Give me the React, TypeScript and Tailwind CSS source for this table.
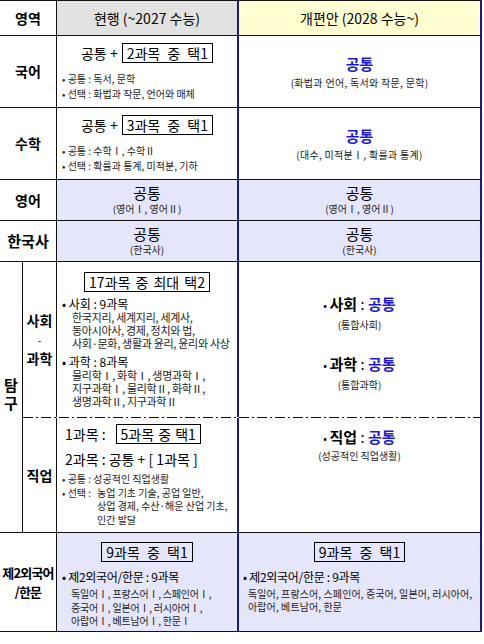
import React from "react";

const Box = ({ children, className = "" }: { children: React.ReactNode; className?: string }) => (
  <span className={"inline-flex items-center h-[20px] border border-black px-[4px] text-[14px] leading-[18px] " + className}>
    {children}
  </span>
);

const Blue = ({ children }: { children: React.ReactNode }) => (
  <span className="font-bold text-[#1a1ad0]">{children}</span>
);

export default function App() {
  return (
    <div className="w-[484px] h-[644px] bg-white font-['Noto_Sans_CJK_KR',sans-serif] text-black">
      <div className="grid grid-cols-[23px_34px_182px_243px] grid-rows-[36px_72px_72px_41px_41px_155px_1px_115px_99px]">
        {/* header */}
        <div className="col-start-1 col-span-2 row-start-1 flex items-center justify-center border-t border-b border-r border-[#111] text-[14px] font-bold">영역</div>
        <div className="col-start-3 row-start-1 flex items-center justify-center bg-[#e2e2e2] border-t border-b border-[#111] border-r-2 border-r-[#1c1c7c] text-[14px]">현행 (~2027 수능)</div>
        <div className="col-start-4 row-start-1 flex items-center justify-center bg-[#ffffd2] border-t border-b border-[#111] border-r-2 border-r-[#1c1c7c] text-[14px]">개편안 (2028 수능~)</div>

        {/* 국어 */}
        <div className="col-start-1 col-span-2 row-start-2 flex items-center justify-center border-b border-r border-[#111] text-[14px] font-bold">국어</div>
        <div className="col-start-3 row-start-2 flex flex-col justify-center border-b border-[#111] border-r-2 border-r-[#1c1c7c] px-[5px]">
          <div className="flex items-center justify-center gap-[4px] text-[14px] leading-[20px]">
            <span>공통 +</span>
            <Box className="[word-spacing:4px]">2과목 중 택1</Box>
          </div>
          <div className="mt-[8px] text-[10px] leading-[15px] text-[#222]">
            <div>• 공통 : 독서, 문학</div>
            <div>• 선택 : 화법과 작문, 언어와 매체</div>
          </div>
        </div>
        <div className="col-start-4 row-start-2 flex flex-col items-center justify-center border-b border-[#111] border-r-2 border-r-[#1c1c7c]">
          <div className="text-[15px] leading-[20px]"><Blue>공통</Blue></div>
          <div className="mt-[2px] text-[10px] leading-[14px] tracking-[0.3px] text-[#222]">(화법과 언어, 독서와 작문, 문학)</div>
        </div>

        {/* 수학 */}
        <div className="col-start-1 col-span-2 row-start-3 flex items-center justify-center border-b border-r border-[#111] text-[14px] font-bold">수학</div>
        <div className="col-start-3 row-start-3 flex flex-col justify-center border-b border-[#111] border-r-2 border-r-[#1c1c7c] px-[5px]">
          <div className="flex items-center justify-center gap-[4px] text-[14px] leading-[20px]">
            <span>공통 +</span>
            <Box className="[word-spacing:4px]">3과목 중 택1</Box>
          </div>
          <div className="mt-[8px] text-[10px] leading-[15px] text-[#222]">
            <div>• 공통 : 수학Ⅰ, 수학Ⅱ</div>
            <div>• 선택 : 확률과 통계, 미적분, 기하</div>
          </div>
        </div>
        <div className="col-start-4 row-start-3 flex flex-col items-center justify-center border-b border-[#111] border-r-2 border-r-[#1c1c7c]">
          <div className="text-[15px] leading-[20px]"><Blue>공통</Blue></div>
          <div className="mt-[2px] text-[10px] leading-[14px] tracking-[0.3px] text-[#222]">(대수, 미적분Ⅰ, 확률과 통계)</div>
        </div>

        {/* 영어 */}
        <div className="col-start-1 col-span-2 row-start-4 flex items-center justify-center border-b border-r border-[#111] text-[14px] font-bold">영어</div>
        <div className="col-start-3 row-start-4 flex flex-col items-center justify-center bg-[#e6e6fa] border-b border-[#111] border-r-2 border-r-[#1c1c7c]">
          <div className="text-[15px] leading-[18px]">공통</div>
          <div className="text-[10px] leading-[14px] text-[#222]">(영어Ⅰ, 영어Ⅱ)</div>
        </div>
        <div className="col-start-4 row-start-4 flex flex-col items-center justify-center bg-[#e6e6fa] border-b border-[#111] border-r-2 border-r-[#1c1c7c]">
          <div className="text-[15px] leading-[18px]">공통</div>
          <div className="text-[10px] leading-[14px] text-[#222]">(영어Ⅰ, 영어Ⅱ)</div>
        </div>

        {/* 한국사 */}
        <div className="col-start-1 col-span-2 row-start-5 flex items-center justify-center border-b border-r border-[#111] text-[15px] font-bold">한국사</div>
        <div className="col-start-3 row-start-5 flex flex-col items-center justify-center bg-[#e6e6fa] border-b border-[#111] border-r-2 border-r-[#1c1c7c]">
          <div className="text-[15px] leading-[18px]">공통</div>
          <div className="text-[10px] leading-[14px] text-[#222]">(한국사)</div>
        </div>
        <div className="col-start-4 row-start-5 flex flex-col items-center justify-center bg-[#e6e6fa] border-b border-[#111] border-r-2 border-r-[#1c1c7c]">
          <div className="text-[15px] leading-[18px]">공통</div>
          <div className="text-[10px] leading-[14px] text-[#222]">(한국사)</div>
        </div>

        {/* 탐구 */}
        <div className="col-start-1 row-start-6 row-span-3 flex flex-col items-center justify-center border-b border-r border-[#111] pb-[6px] text-[15px] font-bold leading-[18px]">
          <span>탐</span>
          <span>구</span>
        </div>
        <div className="col-start-2 row-start-6 flex flex-col items-center justify-center border-r border-[#111] text-[14px] font-bold leading-[19px]">
          <span>사회</span>
          <span className="text-[10px] font-normal">-</span>
          <span>과학</span>
        </div>
        <div className="col-start-3 row-start-6 flex flex-col border-r-2 border-r-[#1c1c7c] pt-[10px]">
          <div className="flex justify-center">
            <Box className="h-[19px] [word-spacing:2px]">17과목 중 최대 택2</Box>
          </div>
          <div className="mt-[4px] pl-[5px] text-[12px] leading-[15px]">• 사회 : 9과목</div>
          <div className="pl-[15px] text-[11px] leading-[13px] tracking-[-0.3px] text-[#222]">
            <div>한국지리, 세계지리, 세계사,</div>
            <div>동아시아사, 경제, 정치와 법,</div>
            <div>사회·문화, 생활과 윤리, 윤리와 사상</div>
          </div>
          <div className="mt-[4px] pl-[5px] text-[12px] leading-[15px]">• 과학 : 8과목</div>
          <div className="pl-[15px] text-[11px] leading-[13px] tracking-[-0.3px] text-[#222]">
            <div>물리학Ⅰ, 화학Ⅰ, 생명과학Ⅰ,</div>
            <div>지구과학Ⅰ, 물리학Ⅱ, 화학Ⅱ,</div>
            <div>생명과학Ⅱ, 지구과학Ⅱ</div>
          </div>
        </div>
        <div className="col-start-4 row-start-6 flex flex-col items-center border-r-2 border-r-[#1c1c7c] pt-[32px]">
          <div className="text-[15px] leading-[20px]"><span className="text-[11px]">• </span><span className="font-bold">사회</span> : <Blue>공통</Blue></div>
          <div className="mt-[3px] text-[10px] leading-[14px] text-[#222]">(통합사회)</div>
          <div className="mt-[22px] text-[15px] leading-[20px]"><span className="text-[11px]">• </span><span className="font-bold">과학</span> : <Blue>공통</Blue></div>
          <div className="mt-[3px] text-[10px] leading-[14px] text-[#222]">(통합과학)</div>
        </div>

        {/* dash-dot line */}
        <div className="col-start-2 col-span-3 row-start-7 border-r-2 border-r-[#1c1c7c] bg-[repeating-linear-gradient(90deg,#111_0px,#111_10px,transparent_10px,transparent_13px,#111_13px,#111_15px,transparent_15px,transparent_18px)]"></div>

        {/* 직업 */}
        <div className="col-start-2 row-start-8 flex items-center justify-center border-b border-r border-[#111] text-[14px] font-bold">직업</div>
        <div className="col-start-3 row-start-8 flex flex-col border-b border-[#111] border-r-2 border-r-[#1c1c7c] pt-[6px]">
          <div className="flex items-center pl-[8px] text-[14px] leading-[20px]">
            <span>1과목 :</span>
            <Box className="ml-[10px] [word-spacing:1px]">5과목 중 택1</Box>
          </div>
          <div className="mt-[5px] pl-[8px] text-[14px] leading-[20px]">2과목 : 공통 + [ 1과목 ]</div>
          <div className="mt-[3px] pl-[5px] text-[10px] leading-[13.5px] text-[#222]">
            <div>• 공통 : 성공적인 직업생활</div>
            <div className="flex">
              <span className="w-[35px] shrink-0 whitespace-pre">• 선택 : </span>
              <span>
                농업 기초 기술, 공업 일반,<br />
                상업 경제, 수산·해운 산업 기초,<br />
                인간 발달
              </span>
            </div>
          </div>
        </div>
        <div className="col-start-4 row-start-8 flex flex-col items-center border-b border-[#111] border-r-2 border-r-[#1c1c7c] pt-[9px]">
          <div className="text-[15px] leading-[20px]"><span className="text-[11px]">• </span><span className="font-bold">직업</span> : <Blue>공통</Blue></div>
          <div className="mt-[1px] text-[10px] leading-[14px] text-[#222]">(성공적인 직업생활)</div>
        </div>

        {/* 제2외국어 */}
        <div className="col-start-1 col-span-2 row-start-9 flex flex-col items-center justify-center border-b border-r border-[#111] text-[13px] font-bold leading-[19px] tracking-[-0.8px]">
          <span>제2외국어</span>
          <span>/한문</span>
        </div>
        <div className="col-start-3 row-start-9 flex flex-col bg-[#e6e6fa] border-b border-[#111] border-r-2 border-r-[#1c1c7c] pt-[9px]">
          <div className="flex justify-center">
            <Box className="[word-spacing:4px]">9과목 중 택1</Box>
          </div>
          <div className="mt-[7px] pl-[5px] text-[12px] leading-[16px] tracking-[-0.3px]">• 제2외국어/한문 : 9과목</div>
          <div className="mt-[2px] pl-[14px] text-[10px] leading-[13.5px] tracking-[-0.2px] text-[#222]">
            <div>독일어Ⅰ, 프랑스어Ⅰ, 스페인어Ⅰ,</div>
            <div>중국어Ⅰ, 일본어Ⅰ, 러시아어Ⅰ,</div>
            <div>아랍어Ⅰ, 베트남어Ⅰ, 한문Ⅰ</div>
          </div>
        </div>
        <div className="col-start-4 row-start-9 flex flex-col bg-[#e6e6fa] border-b border-[#111] border-r-2 border-r-[#1c1c7c] pt-[9px]">
          <div className="flex justify-center">
            <Box className="[word-spacing:4px]">9과목 중 택1</Box>
          </div>
          <div className="mt-[7px] pl-[4px] text-[12px] leading-[16px] tracking-[-0.3px]">• 제2외국어/한문 : 9과목</div>
          <div className="mt-[2px] pl-[9px] text-[10px] leading-[13px] tracking-[0.1px] text-[#222]">
            <div>독일어, 프랑스어, 스페인어, 중국어, 일본어, 러시아어,</div>
            <div>아랍어, 베트남어, 한문</div>
          </div>
        </div>
      </div>
    </div>
  );
}
